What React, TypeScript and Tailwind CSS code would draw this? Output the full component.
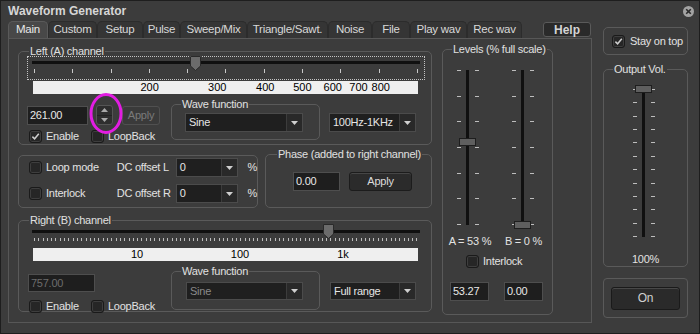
import React from "react";

const tabs = [
  { label: "Main", w: "w-[40px]", active: true },
  { label: "Custom", w: "w-[49px]" },
  { label: "Setup", w: "w-[46px]" },
  { label: "Pulse", w: "w-[37px]" },
  { label: "Sweep/Mix", w: "w-[67px]" },
  { label: "Triangle/Sawt.", w: "w-[81px]" },
  { label: "Noise", w: "w-[44px]" },
  { label: "File", w: "w-[38px]" },
  { label: "Play wav", w: "w-[57px]" },
  { label: "Rec wav", w: "w-[55px]" },
];

// log-scale axis labels under the frequency sliders
const scaleA = [200, 300, 400, 500, 600, 700, 800];
const scaleB = [
  { f: 10, t: "10" },
  { f: 100, t: "100" },
  { f: 1000, t: "1k" },
];

function Check({ checked = false }: { checked?: boolean }) {
  return (
    <span className="flex h-[13px] w-[13px] shrink-0 items-center justify-center rounded-[3px] border border-[#1a1a1a] bg-[#262626] shadow-[inset_0_0_0_1px_#3e3e3e]">
      {checked && (
        <svg width="9" height="9" viewBox="0 0 9 9">
          <path d="M1.4 4.6 L3.6 6.8 L7.8 1.8" fill="none" stroke="#cdcdcd" strokeWidth="1.5" />
        </svg>
      )}
    </span>
  );
}

function Field({ value, className, disabled }: { value: string; className: string; disabled?: boolean }) {
  return (
    <div
      className={`flex items-center border border-[#4e4e4e] bg-[#1e1e1e] pl-[2px] ${
        disabled ? "text-[#6c6c6c]" : "text-[#e8e8e8]"
      } ${className}`}
    >
      {value}
    </div>
  );
}

function Select({ value, className, disabled }: { value: string; className: string; disabled?: boolean }) {
  return (
    <div className={`flex border border-[#4b4b4b] bg-[#1f1f1f] ${className}`}>
      <span className={`flex flex-1 items-center pl-[3px] ${disabled ? "text-[#8a8a8a]" : "text-[#e6e6e6]"}`}>
        {value}
      </span>
      <span className="flex w-[16px] items-center justify-center border-l border-[#3c3c3c] bg-[#292929]">
        <svg width="7" height="4" viewBox="0 0 7 4">
          <path d="M0 0H7L3.5 4Z" fill="#cfcfcf" />
        </svg>
      </span>
    </div>
  );
}

function Group({
  label,
  className,
  legend,
  children,
}: {
  label: string;
  className: string;
  legend: string;
  children: React.ReactNode;
}) {
  return (
    <fieldset className={`rounded-[5px] border border-[#5a5a5a] ${className}`}>
      <legend className={`px-[1px] leading-[12px] text-[#e0e0e0] ${legend}`}>{label}</legend>
      {children}
    </fieldset>
  );
}

function Thumb({ className }: { className: string }) {
  return (
    <svg className={`absolute ${className}`} width="11" height="15" viewBox="0 0 11 15">
      <path d="M0.5 0.5H10.5V10L5.5 14.5L0.5 10Z" fill="#6b6b6b" stroke="#2a2a2a" />
    </svg>
  );
}

function VSlider({
  ticks,
  className,
  thumb,
}: {
  ticks: number;
  className: string;
  thumb: string;
}) {
  const col = (
    <div className="flex w-[4px] flex-col justify-between">
      {Array.from({ length: ticks }).map((_, i) => (
        <span key={i} className="h-[1px] w-[4px] bg-[#bdbdbd]" />
      ))}
    </div>
  );
  return (
    <div className={`relative flex ${className}`}>
      {col}
      <div className="ml-[5px] w-[3px] bg-[#101010]" />
      <div className="ml-[6px] flex">{col}</div>
      <span className={`absolute left-[2px] h-[8px] w-[17px] border border-[#1e1e1e] bg-[#5f5f5f] ${thumb}`} />
    </div>
  );
}

export default function App() {
  return (
    <div className="relative h-[334px] w-[700px] overflow-hidden border border-[#1e1e1e] bg-[#3c3c3c] font-['Liberation_Sans',Arial,sans-serif] text-[11px] tracking-[-0.25px] text-[#e2e2e2]">
      {/* title bar */}
      <div className="flex h-[20px] items-center pl-[7px]">
        <span className="text-[12px] font-bold tracking-normal text-[#d6d6d6]">Waveform Generator</span>
        <span className="ml-auto mr-[5px] flex h-[11px] w-[11px] items-center justify-center rounded-full bg-[#a3a3a3]">
          <svg width="7" height="7" viewBox="0 0 7 7">
            <path d="M1.2 1.2L5.8 5.8M5.8 1.2L1.2 5.8" stroke="#2a2a2a" strokeWidth="1.6" />
          </svg>
        </span>
      </div>

      <div className="flex">
        <div className="ml-[7px] w-[584px]">
          {/* tab strip */}
          <div className="flex h-[17px] items-end">
            {tabs.map((t) => (
              <div
                key={t.label}
                className={`flex h-[17px] items-center justify-center rounded-t-[5px] border border-b-0 text-[11.5px] ${t.w} ${
                  t.active
                    ? "border-[#5a5a5a] bg-[#484848] text-[#e8e8e8]"
                    : "border-[#2c2c2c] bg-[#353535] text-[#d8d8d8]"
                }`}
              >
                {t.label}
              </div>
            ))}
            <div className="mb-[1px] ml-[21px] flex h-[15px] w-[48px] items-center justify-center rounded-[3px] border border-[#5a5a5a] bg-[#2a2a2a] text-[12px] font-bold tracking-normal text-[#d4d4d4]">
              Help
            </div>
          </div>

          {/* main panel */}
          <div className="flex h-[285px] border border-[#575757]">
            <div className="ml-[9px] w-[414px]">
              <Group label="Left (A) channel" className="mt-[6px] h-[100px] w-[414px]" legend="ml-[10px]">
                <div className="relative ml-[8px] mt-[-1px] h-[24px] w-[398px] border border-dotted border-[#c4c4c4]">
                  <div className="ml-[4px] mt-[4px] h-[3px] w-[388px] bg-[#101010]" />
                  <div className="ml-[6px] mt-[5px] flex w-[384px] justify-between">
                    {Array.from({ length: 11 }).map((_, i) => (
                      <span key={i} className="h-[4px] w-[1px] bg-[#c8c8c8]" />
                    ))}
                  </div>
                  <Thumb className="left-[162px] top-[-1px]" />
                </div>
                <div className="relative ml-[14px] mt-[1px] h-[13px] w-[385px] bg-[#efefef] text-[11px] leading-[13px] tracking-normal text-black">
                  {scaleA.map((f) => (
                    <span
                      key={f}
                      className="absolute top-0 -translate-x-1/2"
                      style={{ left: 384 * Math.log10(f / 100) + 1 }}
                    >
                      {f}
                    </span>
                  ))}
                </div>
                <div className="ml-[8px] mt-[4px] flex items-start">
                  <div className="w-[144px]">
                    <div className="mt-[8px] flex items-start">
                      <Field value="261.00" className="h-[19px] w-[61px]" />
                      <div className="ml-[8px] mt-[-1px] flex h-[20px] w-[17px] flex-col rounded-[3px] border border-[#555] bg-[#2e2e2e]">
                        <span className="flex flex-1 items-center justify-center border-b border-[#222]">
                          <svg width="7" height="4" viewBox="0 0 7 4">
                            <path d="M0 4H7L3.5 0Z" fill="#a8a8a8" />
                          </svg>
                        </span>
                        <span className="flex flex-1 items-center justify-center">
                          <svg width="7" height="4" viewBox="0 0 7 4">
                            <path d="M0 0H7L3.5 4Z" fill="#a8a8a8" />
                          </svg>
                        </span>
                      </div>
                      <div className="ml-[9px] flex h-[19px] w-[38px] items-center justify-center rounded-[3px] border border-[#505050] bg-[#3a3a3a] text-[#7a7a7a]">
                        Apply
                      </div>
                    </div>
                    <div className="mt-[3px] flex items-center">
                      <div className="ml-[2px] flex w-[62px] items-center">
                        <Check checked />
                        <span className="ml-[4px]">Enable</span>
                      </div>
                      <Check />
                      <span className="ml-[4px]">LoopBack</span>
                    </div>
                  </div>
                  <Group label="Wave function" className="h-[42px] w-[149px]" legend="ml-[9px]">
                    <Select value="Sine" className="ml-[13px] mt-[3px] h-[19px] w-[118px]" />
                  </Group>
                  <Select value="100Hz-1KHz" className="ml-[9px] mt-[15px] h-[19px] w-[87px]" />
                </div>
              </Group>

              <div className="mt-[3px] flex items-start">
                <div className="mt-[7px] h-[53px] w-[240px] rounded-[5px] border border-[#5a5a5a]">
                  <div className="mt-[2px] flex h-[19px] items-center">
                    <div className="flex w-[98px] items-center pl-[10px]">
                      <Check />
                      <span className="ml-[4px]">Loop mode</span>
                    </div>
                    <span className="w-[59px]">DC offset L</span>
                    <Select value="0" className="h-[19px] w-[63px]" />
                    <span className="ml-[9px]">%</span>
                  </div>
                  <div className="mt-[7px] flex h-[19px] items-center">
                    <div className="flex w-[98px] items-center pl-[10px]">
                      <Check />
                      <span className="ml-[4px]">Interlock</span>
                    </div>
                    <span className="w-[59px]">DC offset R</span>
                    <Select value="0" className="h-[19px] w-[63px]" />
                    <span className="ml-[9px]">%</span>
                  </div>
                </div>
                <Group label="Phase (added to right channel)" className="ml-[7px] h-[60px] w-[167px]" legend="ml-[11px]">
                  <div className="mt-[12px] flex">
                    <Field value="0.00" className="ml-[27px] h-[19px] w-[47px]" />
                    <div className="ml-[9px] flex h-[19px] w-[63px] items-center justify-center rounded-[3px] border border-[#1c1c1c] bg-[#2b2b2b] text-[#dcdcdc] shadow-[inset_0_1px_0_#464646]">
                      Apply
                    </div>
                  </div>
                </Group>
              </div>

              <Group label="Right (B) channel" className="mt-[6px] h-[98px] w-[414px]" legend="ml-[10px]">
                <div className="relative ml-[8px] mt-[-1px] h-[24px] w-[398px] border border-transparent">
                  <div className="ml-[4px] mt-[4px] h-[3px] w-[388px] bg-[#101010]" />
                  <div className="ml-[6px] mt-[5px] flex w-[384px] justify-between">
                    {Array.from({ length: 90 }).map((_, i) => (
                      <span key={i} className="h-[3px] w-[1px] bg-[#bdbdbd]" />
                    ))}
                  </div>
                  <Thumb className="left-[295px] top-[-2px]" />
                </div>
                <div className="relative ml-[14px] mt-[-1px] h-[13px] w-[385px] bg-[#efefef] text-[11px] leading-[13px] tracking-normal text-black">
                  {scaleB.map((s) => (
                    <span
                      key={s.t}
                      className="absolute top-0 -translate-x-1/2"
                      style={{ left: 103 * Math.log10(s.f) + 1 }}
                    >
                      {s.t}
                    </span>
                  ))}
                </div>
                <div className="ml-[8px] mt-[4px] flex items-start">
                  <div className="w-[144px]">
                    <Field value="757.00" disabled className="ml-[1px] mt-[9px] h-[18px] w-[67px]" />
                    <div className="mt-[6px] flex items-center">
                      <div className="ml-[2px] flex w-[62px] items-center">
                        <Check />
                        <span className="ml-[4px]">Enable</span>
                      </div>
                      <Check />
                      <span className="ml-[4px]">LoopBack</span>
                    </div>
                  </div>
                  <Group label="Wave function" className="h-[45px] w-[149px]" legend="ml-[9px]">
                    <Select value="Sine" disabled className="ml-[14px] mt-[5px] h-[18px] w-[117px]" />
                  </Group>
                  <Select value="Full range" className="ml-[10px] mt-[17px] h-[18px] w-[86px]" />
                </div>
              </Group>
            </div>

            <Group label="Levels (% full scale)" className="ml-[10px] mt-[4px] h-[272px] w-[111px]" legend="ml-[9px]">
              <div className="mt-[12px] flex">
                <VSlider ticks={7} className="ml-[14px] h-[162px] pb-[4px] pt-[3px]" thumb="top-[71px]" />
                <VSlider ticks={7} className="ml-[33px] h-[162px] pb-[4px] pt-[3px]" thumb="top-[154px]" />
              </div>
              <div className="mt-[6px] flex leading-[12px]">
                <span className="w-[54px] text-center">A = 53 %</span>
                <span className="w-[53px] text-center">B = 0 %</span>
              </div>
              <div className="ml-[23px] mt-[6px] flex items-center">
                <Check />
                <span className="ml-[4px]">Interlock</span>
              </div>
              <div className="mt-[12px] flex">
                <Field value="53.27" className="ml-[7px] h-[19px] w-[39px]" />
                <Field value="0.00" className="ml-[15px] h-[19px] w-[39px]" />
              </div>
            </Group>
          </div>
        </div>

        {/* right column */}
        <div className="ml-[11px] w-[85px]">
          <div className="mt-[6px] flex h-[28px] items-center rounded-[5px] border border-[#5a5a5a] pl-[8px]">
            <Check checked />
            <span className="ml-[5px]">Stay on top</span>
          </div>
          <Group label="Output Vol." className="mt-[8px] h-[204px] w-[85px]" legend="ml-[9px]">
            <VSlider ticks={12} className="ml-[29px] mt-[10px] h-[155px] pb-[3px] pt-[4px]" thumb="top-[0px]" />
            <div className="mt-[13px] text-center leading-[12px]">100%</div>
          </Group>
          <div className="mt-[11px] flex h-[40px] items-center justify-center rounded-[4px] border border-[#5a5a5a]">
            <div className="flex h-[23px] w-[69px] items-center justify-center rounded-[3px] border border-[#1a1a1a] bg-[#2a2a2a] text-[12px] text-[#d0d0d0] shadow-[inset_0_1px_0_#484848]">
              On
            </div>
          </div>
        </div>
      </div>

      {/* annotation ring around the spin button */}
      <svg className="absolute left-[88px] top-[92px]" width="34" height="41" viewBox="0 0 34 41">
        <ellipse cx="17" cy="20.5" rx="15" ry="19" fill="none" stroke="#e21de2" strokeWidth="3" />
      </svg>
    </div>
  );
}
